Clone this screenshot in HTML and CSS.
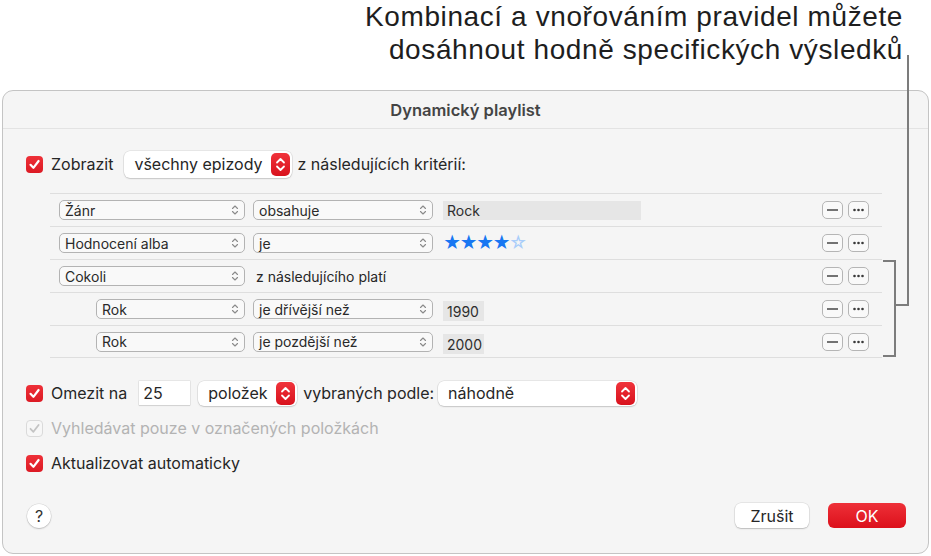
FILE: index.html
```html
<!DOCTYPE html>
<html lang="cs">
<head>
<meta charset="utf-8">
<link rel="stylesheet" href="styles.css">
</head>
<body>
<div class="page">
  <div class="callout">
    <p>Kombinací a vnořováním pravidel můžete<br>dosáhnout hodně specifických výsledků</p>
  </div>
  <div class="dialog">
    <div class="title">Dynamický playlist</div>
    <div class="content">
      <div class="row-top">
        <span class="cb"><svg viewBox="0 0 17 17"><path d="M4.5 8.8 L7.4 11.8 L12.6 5" /></svg></span>
        <span class="lbl">Zobrazit</span>
        <span class="popup-lg w-epi"><span>všechny epizody</span><span class="stepper"><svg viewBox="0 0 19 23"><path d="M6 9.5 L9.5 6 L13 9.5 M6 13.5 L9.5 17 L13 13.5"/></svg></span></span>
        <span class="lbl">z následujících kritérií:</span>
      </div>

      <div class="rules">
        <div class="rule">
          <div class="c1"><span class="pop"><span>Žánr</span><svg class="chev" viewBox="0 0 8 12"><path d="M1.5 4.5 L4 2 L6.5 4.5 M1.5 7.5 L4 10 L6.5 7.5"/></svg></span></div>
          <div class="c2"><span class="pop"><span>obsahuje</span><svg class="chev" viewBox="0 0 8 12"><path d="M1.5 4.5 L4 2 L6.5 4.5 M1.5 7.5 L4 10 L6.5 7.5"/></svg></span></div>
          <div class="c3"><span class="field wide">Rock</span></div>
          <div class="btns"><span class="sb"><svg viewBox="0 0 21 18"><path d="M5 9 H16"/></svg></span><span class="sb"><svg viewBox="0 0 21 18"><circle cx="6.5" cy="9" r="1.3"/><circle cx="10.5" cy="9" r="1.3"/><circle cx="14.5" cy="9" r="1.3"/></svg></span></div>
        </div>
        <div class="rule">
          <div class="c1"><span class="pop"><span>Hodnocení alba</span><svg class="chev" viewBox="0 0 8 12"><path d="M1.5 4.5 L4 2 L6.5 4.5 M1.5 7.5 L4 10 L6.5 7.5"/></svg></span></div>
          <div class="c2"><span class="pop"><span>je</span><svg class="chev" viewBox="0 0 8 12"><path d="M1.5 4.5 L4 2 L6.5 4.5 M1.5 7.5 L4 10 L6.5 7.5"/></svg></span></div>
          <div class="c3 stars"><span class="on">★★★★</span><span class="off">☆</span></div>
          <div class="btns"><span class="sb"><svg viewBox="0 0 21 18"><path d="M5 9 H16"/></svg></span><span class="sb"><svg viewBox="0 0 21 18"><circle cx="6.5" cy="9" r="1.3"/><circle cx="10.5" cy="9" r="1.3"/><circle cx="14.5" cy="9" r="1.3"/></svg></span></div>
        </div>
        <div class="rule">
          <div class="c1"><span class="pop"><span>Cokoli</span><svg class="chev" viewBox="0 0 8 12"><path d="M1.5 4.5 L4 2 L6.5 4.5 M1.5 7.5 L4 10 L6.5 7.5"/></svg></span></div>
          <div class="c2 plain">z následujícího platí</div>
          <div class="c3"></div>
          <div class="btns"><span class="sb"><svg viewBox="0 0 21 18"><path d="M5 9 H16"/></svg></span><span class="sb"><svg viewBox="0 0 21 18"><circle cx="6.5" cy="9" r="1.3"/><circle cx="10.5" cy="9" r="1.3"/><circle cx="14.5" cy="9" r="1.3"/></svg></span></div>
        </div>
        <div class="rule">
          <div class="c1 indent"><span class="pop"><span>Rok</span><svg class="chev" viewBox="0 0 8 12"><path d="M1.5 4.5 L4 2 L6.5 4.5 M1.5 7.5 L4 10 L6.5 7.5"/></svg></span></div>
          <div class="c2"><span class="pop"><span>je dřívější než</span><svg class="chev" viewBox="0 0 8 12"><path d="M1.5 4.5 L4 2 L6.5 4.5 M1.5 7.5 L4 10 L6.5 7.5"/></svg></span></div>
          <div class="c3"><span class="field narrow">1990</span></div>
          <div class="btns"><span class="sb"><svg viewBox="0 0 21 18"><path d="M5 9 H16"/></svg></span><span class="sb"><svg viewBox="0 0 21 18"><circle cx="6.5" cy="9" r="1.3"/><circle cx="10.5" cy="9" r="1.3"/><circle cx="14.5" cy="9" r="1.3"/></svg></span></div>
        </div>
        <div class="rule last">
          <div class="c1 indent"><span class="pop"><span>Rok</span><svg class="chev" viewBox="0 0 8 12"><path d="M1.5 4.5 L4 2 L6.5 4.5 M1.5 7.5 L4 10 L6.5 7.5"/></svg></span></div>
          <div class="c2"><span class="pop"><span>je pozdější než</span><svg class="chev" viewBox="0 0 8 12"><path d="M1.5 4.5 L4 2 L6.5 4.5 M1.5 7.5 L4 10 L6.5 7.5"/></svg></span></div>
          <div class="c3"><span class="field narrow">2000</span></div>
          <div class="btns"><span class="sb"><svg viewBox="0 0 21 18"><path d="M5 9 H16"/></svg></span><span class="sb"><svg viewBox="0 0 21 18"><circle cx="6.5" cy="9" r="1.3"/><circle cx="10.5" cy="9" r="1.3"/><circle cx="14.5" cy="9" r="1.3"/></svg></span></div>
        </div>
      </div>

      <div class="row-limit">
        <span class="cb"><svg viewBox="0 0 17 17"><path d="M4.5 8.8 L7.4 11.8 L12.6 5" /></svg></span>
        <span class="lbl">Omezit na</span>
        <span class="tfield">25</span>
        <span class="popup-lg w-pol"><span>položek</span><span class="stepper"><svg viewBox="0 0 19 23"><path d="M6 9.5 L9.5 6 L13 9.5 M6 13.5 L9.5 17 L13 13.5"/></svg></span></span>
        <span class="lbl">vybraných podle:</span>
        <span class="popup-lg w-nah"><span>náhodně</span><span class="stepper"><svg viewBox="0 0 19 23"><path d="M6 9.5 L9.5 6 L13 9.5 M6 13.5 L9.5 17 L13 13.5"/></svg></span></span>
      </div>

      <div class="row-check disabled">
        <span class="cb off"><svg viewBox="0 0 17 17"><path d="M4.5 8.8 L7.4 11.8 L12.6 5" /></svg></span>
        <span class="lbl">Vyhledávat pouze v označených položkách</span>
      </div>

      <div class="row-check auto">
        <span class="cb"><svg viewBox="0 0 17 17"><path d="M4.5 8.8 L7.4 11.8 L12.6 5" /></svg></span>
        <span class="lbl">Aktualizovat automaticky</span>
      </div>

      <div class="footer">
        <span class="help">?</span>
        <span class="spacer"></span>
        <span class="btn cancel">Zrušit</span>
        <span class="btn ok">OK</span>
      </div>
    </div>
  </div>
  <svg class="lines" viewBox="0 0 931 556" width="931" height="556">
    <path d="M908 55 V305 H895" />
    <path d="M883 261 H895 V356 H883" />
  </svg>
</div>
</body>
</html>
```

FILE: styles.css
```css
* { box-sizing: border-box; }
html, body { margin: 0; padding: 0; background: #fff; }
body { width: 931px; height: 556px; overflow: hidden; font-family: Inter, "Liberation Sans", sans-serif; color: #262626; }

.page { position: relative; width: 931px; height: 556px; }

.callout { height: 90px; display: flex; justify-content: flex-end; }
.callout p {
  margin: 0; padding: 0 28px 0 0; text-align: right;
  font-family: "Liberation Sans", Arial, sans-serif; font-size: 28px; line-height: 33px;
  color: #1e1e1e; letter-spacing: 0.6px;
}

.dialog {
  margin: 0 2px; height: 464px;
  border: 1px solid #c4c4c4; border-radius: 11px;
  background: #f5f5f5;
  display: flex; flex-direction: column;
}
.title {
  height: 38px; flex: none;
  display: flex; align-items: center; justify-content: center;
  font-weight: 600; font-size: 16.5px; color: #444;
  border-bottom: 1px solid #e3e3e3;
}
.content { padding: 21px 0 0 21px; display: flex; flex-direction: column; flex: 1; }

.cb {
  width: 17px; height: 17px; border-radius: 4px; flex: none;
  background: linear-gradient(#ee3038, #dc1a24);
  display: inline-flex;
}
.cb svg { width: 17px; height: 17px; }
.cb path { fill: none; stroke: #fff; stroke-width: 2.2; stroke-linecap: round; stroke-linejoin: round; }
.cb.off { background: #f7f7f7; border: 1px solid #dadada; }
.cb.off svg { margin: -1px; }
.cb.off path { stroke: #c4c4c4; stroke-width: 1.8; }

.lbl { font-size: 16px; white-space: nowrap; }

.row-top { display: flex; align-items: center; height: 28px; }
.row-top .cb { margin-left: 2px; }
.row-top .cb + .lbl { margin-left: 8px; }
.popup-lg {
  height: 27px; background: #fff; border-radius: 6px;
  box-shadow: 0 0 0 0.5px rgba(0,0,0,0.12), 0 1px 1.5px rgba(0,0,0,0.14);
  display: flex; align-items: center; justify-content: space-between;
  padding: 0 2px 0 10px; font-size: 16px; flex: none;
}
.w-epi { width: 168px; margin: 0 5px 0 11px; }
.stepper {
  width: 19px; height: 23px; border-radius: 5px;
  background: linear-gradient(#f0333b, #d8121d);
  display: inline-flex;
}
.stepper svg { width: 19px; height: 23px; }
.stepper path { fill: none; stroke: #fff; stroke-width: 1.8; stroke-linecap: round; stroke-linejoin: round; }

.rules { margin: 15px 46px 0 26px; }
.rule {
  height: 33px; border-top: 1px solid #dedede;
  display: flex; align-items: center; padding: 0 13px 0 9px;
}
.rule.last { border-bottom: 1px solid #dedede; height: 33px; }
.c1 { width: 186px; flex: none; display: flex; }
.c1.indent { padding-left: 37px; }
.c2 { width: 180px; flex: none; margin-left: 8px; display: flex; }
.c2.plain { font-size: 14px; padding-left: 3px; }
.c3 { flex: 1; margin-left: 10px; display: flex; align-items: center; }
.pop {
  width: 100%; height: 20px; border: 1px solid #b3b3b3; border-radius: 5px;
  background: #f9f9f9; display: flex; align-items: center; justify-content: space-between;
  padding: 0 5px 0 5px; font-size: 14px; color: #2a2a2a;
}
.chev { width: 8px; height: 12px; }
.chev path { fill: none; stroke: #8a8a8a; stroke-width: 1.1; stroke-linecap: round; stroke-linejoin: round; }
.field {
  height: 19px; background: #e6e6e6; font-size: 14px; color: #2e2e2e;
  display: flex; align-items: center; padding: 1px 4px 0 4px;
}
.field.wide { width: 198px; }
.field.narrow { width: 41px; height: 20px; margin-top: 4px; }
.stars { font-size: 17.5px; line-height: 1; letter-spacing: -1.8px; }
.stars .on { color: #1877f2; }
.stars .off { color: #a9cdfa; }
.btns { display: flex; gap: 5px; }
.sb {
  width: 21px; height: 18px; border: 1px solid #b5b5b5; border-radius: 5px;
  background: #f9f9f9; display: flex; align-items: center; justify-content: center;
}
.sb svg { width: 21px; height: 18px; flex: none; margin: -1px; }
.sb path { stroke: #3a3a3a; stroke-width: 1.4; fill: none; }
.sb circle { fill: #3a3a3a; }

.row-limit { display: flex; align-items: center; height: 24px; margin-top: 23px; }
.row-limit .cb { margin-left: 2px; }
.row-limit .cb + .lbl { margin-left: 8px; }
.tfield {
  width: 51px; height: 24px; background: #fff; margin-left: 12px;
  box-shadow: 0 0 0 0.5px rgba(0,0,0,0.12), 0 1px 1px rgba(0,0,0,0.08);
  font-size: 16px; display: flex; align-items: center; padding-left: 4px;
}
.row-limit .popup-lg { height: 25px; }
.w-pol { width: 99px; margin: 0 6px 0 8px; }
.w-nah { width: 199px; margin-left: 4px; }

.row-check { display: flex; align-items: center; height: 20px; }
.row-check .cb { margin-left: 2px; }
.row-check .lbl { margin-left: 8px; }
.row-check.disabled { margin-top: 13px; }
.row-check.disabled .lbl { color: #b3b3b3; }
.row-check.auto { margin-top: 15px; }

.footer { display: flex; align-items: center; height: 25px; margin-top: 30px; padding-right: 22px; }
.help {
  width: 24px; height: 24px; border-radius: 50%; background: #fff; margin-left: 3px;
  box-shadow: 0 0 0 0.5px rgba(0,0,0,0.12), 0 1px 1.5px rgba(0,0,0,0.18);
  display: flex; align-items: center; justify-content: center; font-size: 16px; color: #333;
}
.spacer { flex: 1; }
.btn {
  height: 25px; border-radius: 6px; display: flex; align-items: center; justify-content: center;
  font-size: 16px;
}
.cancel { width: 74px; background: #fff; color: #262626; box-shadow: 0 0 0 0.5px rgba(0,0,0,0.12), 0 1px 1.5px rgba(0,0,0,0.18); }
.ok { width: 78px; margin-left: 19px; background: linear-gradient(#ee3038, #dc101b); color: #fff; }

.lines { position: absolute; left: 0; top: 0; pointer-events: none; }
.lines path { fill: none; stroke: #7c7c7c; stroke-width: 2; }
```
